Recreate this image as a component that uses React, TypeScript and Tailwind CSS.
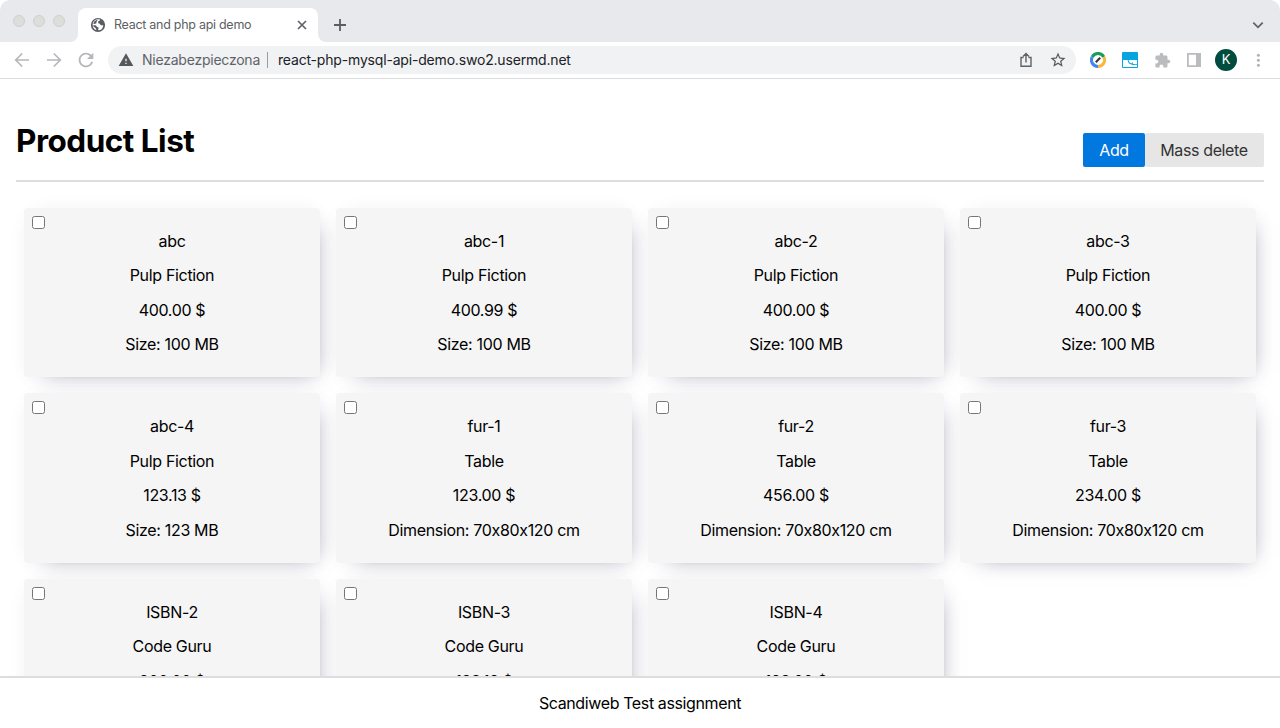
import { MdWarning, MdRefresh, MdStarBorder, MdExtension } from 'react-icons/md';

type Product = { sku: string; name: string; price: string; detail?: string };

const products: Product[] = [
  { sku: 'abc', name: 'Pulp Fiction', price: '400.00 $', detail: 'Size: 100 MB' },
  { sku: 'abc-1', name: 'Pulp Fiction', price: '400.99 $', detail: 'Size: 100 MB' },
  { sku: 'abc-2', name: 'Pulp Fiction', price: '400.00 $', detail: 'Size: 100 MB' },
  { sku: 'abc-3', name: 'Pulp Fiction', price: '400.00 $', detail: 'Size: 100 MB' },
  { sku: 'abc-4', name: 'Pulp Fiction', price: '123.13 $', detail: 'Size: 123 MB' },
  { sku: 'fur-1', name: 'Table', price: '123.00 $', detail: 'Dimension: 70x80x120 cm' },
  { sku: 'fur-2', name: 'Table', price: '456.00 $', detail: 'Dimension: 70x80x120 cm' },
  { sku: 'fur-3', name: 'Table', price: '234.00 $', detail: 'Dimension: 70x80x120 cm' },
  { sku: 'ISBN-2', name: 'Code Guru', price: '200.00 $' },
  { sku: 'ISBN-3', name: 'Code Guru', price: '123.12 $' },
  { sku: 'ISBN-4', name: 'Code Guru', price: '123.00 $' },
];

function StrokeIcon({ d, className }: { d: string; className: string }) {
  return (
    <svg className={className} viewBox="0 0 16 16" fill="none" stroke="currentColor">
      <path d={d} />
    </svg>
  );
}

function TabStrip() {
  return (
    <div className="flex h-[42px] rounded-t-[10px] bg-[#e8e9ed]">
      <div className="flex w-[70px] items-center gap-2 pl-[13px]">
        {[0, 1, 2].map((i) => (
          <span key={i} className="size-3 rounded-full border border-[#cfcfcf] bg-[#dddddc]" />
        ))}
      </div>
      <div className="flex w-2 items-end bg-white">
        <div className="h-full w-full rounded-br-lg bg-[#e8e9ed]" />
      </div>
      <div className="bg-[#e8e9ed] pt-2">
        <div className="flex h-[34px] w-60 items-center rounded-t-lg bg-white pr-2 pl-3">
          <svg className="size-4" viewBox="0 0 16 16">
            <circle cx="8" cy="8" r="7.1" fill="#5a5d62" />
            <path
              d="M10 2.6C10.3 4 8.2 3.9 8 5.2C7.8 6.6 9.8 6 10.3 7.4C10.7 8.5 12 8.3 13.3 8.2A5.4 5.4 0 0 1 8.2 13.3L8.2 12.1C9 11.2 8.7 10.2 7.4 10C6.2 9.8 6.8 8.3 5.2 8.2L2.7 8.2A5.4 5.4 0 0 0 6.3 13.1L6 11.5L3.6 9.4L2.6 7.5A5.4 5.4 0 0 1 10 2.6Z"
              fill="white"
            />
            <path d="M3.2 6.4A5 5 0 0 1 6.6 3L7.8 2.9L6.6 4.4L6.4 6.3L4.6 6.9Z" fill="#5a5d62" />
          </svg>
          <span className="ml-2 flex-1 text-[12.5px] tracking-[-0.28px] text-[#5c5f64]">React and php api demo</span>
          <StrokeIcon className="size-4 stroke-[1.7] text-[#5f6368]" d="M4 4L12 12M12 4L4 12" />
        </div>
      </div>
      <div className="flex w-2 bg-white">
        <div className="h-full w-full rounded-bl-lg bg-[#e8e9ed]" />
      </div>
      <div className="flex flex-1 items-center justify-between pt-2 pr-[14px] pl-1.5">
        <StrokeIcon className="size-4 stroke-[1.8] text-[#5a5d62]" d="M8 2V14M2 8H14" />
        <StrokeIcon className="size-4 stroke-[1.8] text-[#5f6368]" d="M3.3 5.7L8 10.3L12.7 5.7" />
      </div>
    </div>
  );
}

function Toolbar() {
  return (
    <div className="flex h-[37px] items-center border-b border-[#dcdde0] bg-white pl-[14px]">
      <StrokeIcon className="size-4 stroke-[1.7] text-[#b5b7ba]" d="M15 8H2M8.2 1.5L1.7 8L8.2 14.5" />
      <StrokeIcon className="ml-4 size-4 stroke-[1.7] text-[#b5b7ba]" d="M1 8H14M7.8 1.5L14.3 8L7.8 14.5" />
      <MdRefresh className="ml-[13px] size-[22px] text-[#b5b7ba]" />
      <div className="ml-[11px] flex h-7 w-[968px] items-center rounded-full bg-[#f1f2f4] pr-[9px] pl-[10px] text-[14px]">
        <MdWarning className="size-4 text-[#54575c]" />
        <span className="mb-px ml-2 w-[118px] tracking-[-0.23px] text-[#5f6368]">Niezabezpieczona</span>
        <span className="ml-[7px] h-4 w-px bg-[#9a9da1]" />
        <span className="mb-px ml-[10px] flex-1 tracking-[-0.18px] text-[#202124]">react-php-mysql-api-demo.swo2.usermd.net</span>
        <StrokeIcon
          className="size-4 stroke-[1.4] text-[#5f6368]"
          d="M5.5 5.5H3V14.3H13V5.5H10.5M8 10.5V1.8M5 4.6L8 1.6L11 4.6"
        />
        <MdStarBorder className="ml-[15px] size-[18px] text-[#54575c]" />
      </div>
      <svg className="ml-[14px] size-4" viewBox="0 0 16 16" fill="none" strokeWidth="3">
        <path d="M2.2 5A6.5 6.5 0 0 1 13.8 5" stroke="#1a9c5b" />
        <path d="M13.8 5A6.5 6.5 0 0 1 8 14.5" stroke="#fbb73c" />
        <path d="M8 14.5A6.5 6.5 0 0 1 2.2 5" stroke="#4285f4" />
        <path d="M5.8 10.2L10.2 5.8" stroke="#333" strokeWidth="2" />
      </svg>
      <svg className="ml-4 size-4" viewBox="0 0 16 16">
        <rect width="16" height="16" rx="1" fill="#05a5e1" />
        <path d="M1 8H5.6Q6.2 12.2 9.4 12.4Q11.2 13.4 15 13V15H1Z" fill="white" />
        <path d="M6.6 8H15V12.2Q11 12.6 10.6 11.2V9.4L9.6 11.4Q7.2 11.2 6.6 8Z" fill="white" />
      </svg>
      <MdExtension className="ml-4 size-[17px] text-[#babcbe]" />
      <svg className="ml-[15px] size-4" viewBox="0 0 16 16" fill="#babcbe">
        <path fillRule="evenodd" d="M1 1H15V15H1ZM2.8 2.8V13.2H10V2.8Z" />
      </svg>
      <span className="ml-[13px] flex size-[22px] items-center justify-center rounded-full bg-[#004d40] text-[13px] text-white">
        K
      </span>
      <svg className="ml-[13px] size-4" viewBox="0 0 16 16" fill="#b0b2b5">
        <circle cx="8.4" cy="3.3" r="1.5" />
        <circle cx="8.4" cy="8.3" r="1.5" />
        <circle cx="8.4" cy="13.3" r="1.5" />
      </svg>
    </div>
  );
}

function ProductCard({ product }: { product: Product }) {
  return (
    <article className="relative flex h-[169.4px] flex-col items-center gap-4 rounded bg-[#f5f5f5] pt-6 text-base leading-[18.4px] tracking-[-0.33px] text-black shadow-[8px_8px_20px_-14px_rgba(50,50,93,0.5),2px_2px_24px_-7px_rgba(50,50,93,0.09)]">
      <input type="checkbox" aria-label={product.sku} className="absolute top-2 left-2 size-[13px]" />
      <p>{product.sku}</p>
      <p>{product.name}</p>
      <p>{product.price}</p>
      {product.detail && <p>{product.detail}</p>}
    </article>
  );
}

export default function App() {
  return (
    <div className="flex h-[728px] w-[1280px] flex-col overflow-hidden bg-white font-['Inter',sans-serif]">
      <TabStrip />
      <Toolbar />
      <main className="min-h-0 flex-1 overflow-hidden px-4">
        <header className="flex h-[103px] items-end justify-between border-b-2 border-[#dddddd]">
          <h1 className="pb-5 text-[31.5px] leading-[38px] font-bold tracking-[-0.5px] text-black">Product List</h1>
          <div className="flex pb-[13px] text-base leading-[18px] tracking-[-0.38px]">
            <button className="h-[34px] w-[62px] rounded-xs bg-[#0078e0] text-white">Add</button>
            <button className="h-[34px] w-[119px] rounded-xs bg-[#e6e6e6] pr-px text-[#333333]">Mass delete</button>
          </div>
        </header>
        <section className="grid grid-cols-4 gap-4 px-2 pt-[26px]">
          {products.map((p) => (
            <ProductCard key={p.sku} product={p} />
          ))}
        </section>
      </main>
      <footer className="z-10 flex h-[52px] shrink-0 items-center justify-center border-t-2 border-[#dddddd] bg-white text-base tracking-[-0.38px] text-black">
        Scandiweb Test assignment
      </footer>
    </div>
  );
}
